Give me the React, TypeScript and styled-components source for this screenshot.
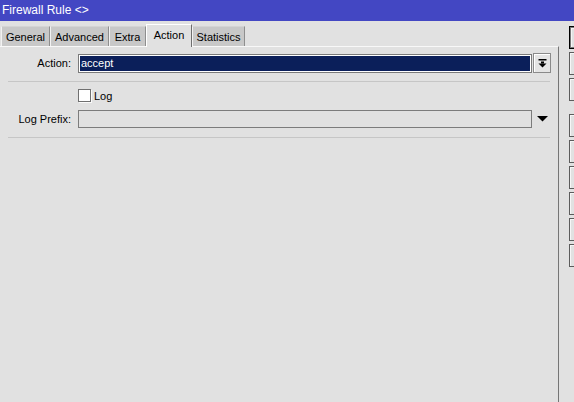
import React from "react";
import styled, { createGlobalStyle } from "styled-components";

const Global = createGlobalStyle`
  html, body { margin: 0; padding: 0; background: #e1e1e1; }
  body { font-family: "Liberation Sans", Arial, sans-serif; font-size: 11px; color: #000; }
  * { box-sizing: border-box; }
`;

const Window = styled.div`
  width: 574px;
  height: 402px;
  overflow: hidden;
  display: flex;
  flex-direction: column;
  background: #e1e1e1;
`;

const TitleBar = styled.div`
  height: 21px;
  flex: none;
  background: #4347c3;
  color: #fff;
  font-size: 12px;
  line-height: 21px;
  padding-left: 2px;
  white-space: nowrap;
`;

const Body = styled.div`
  flex: 1;
  display: flex;
  min-height: 0;
`;

const Left = styled.div`
  width: 559px;
  flex: none;
  display: flex;
  flex-direction: column;
  padding-top: 3px;
`;

const TabStrip = styled.div`
  height: 22px;
  flex: none;
  display: flex;
  align-items: flex-end;
  padding-left: 1px;
`;

const Tab = styled.div<{ $w: number; $active?: boolean }>`
  width: ${(p) => p.$w}px;
  height: ${(p) => (p.$active ? 23 : 20)}px;
  margin-bottom: ${(p) => (p.$active ? -1 : 0)}px;
  position: relative;
  z-index: ${(p) => (p.$active ? 1 : 0)};
  background: ${(p) => (p.$active ? "#e1e1e1" : "#c8c8c8")};
  border-left: 1px solid ${(p) => (p.$active ? "#ffffff" : "#f2f2f2")};
  border-top: 1px solid ${(p) => (p.$active ? "#ffffff" : "#d4d4d4")};
  border-right: 1px solid ${(p) => (p.$active ? "#6e6e6e" : "#8e8e8e")};
  display: flex;
  align-items: center;
  justify-content: center;
  padding-bottom: ${(p) => (p.$active ? 2 : 0)}px;
  white-space: nowrap;
`;

const Panel = styled.div`
  flex: 1;
  border-top: 1px solid #f8f8f8;
  border-right: 1px solid #757575;
  padding: 6px 8px 0 8px;
  display: flex;
  flex-direction: column;
`;

const FieldRow = styled.div<{ $h: number; $mt?: number }>`
  display: grid;
  grid-template-columns: 63px 454px 17px;
  column-gap: 7px;
  height: ${(p) => p.$h}px;
  margin-top: ${(p) => p.$mt ?? 0}px;
  align-items: center;
  & > :nth-child(3) { margin-left: -6px; }
`;

const Label = styled.div`
  text-align: right;
  white-space: nowrap;
`;

const SelectBox = styled.div`
  height: 19px;
  border: 1px solid #7a7a7a;
  background: #0b1f5a;
  box-shadow: inset 0 0 0 1px #ffffff;
  color: #fff;
  padding-left: 2px;
  line-height: 16px;
`;

const TextBox = styled.div`
  height: 18px;
  border: 1px solid #7c7c7c;
  background: #e1e1e1;
`;

const DropButton = styled.div`
  width: 18px;
  height: 20px;
  border: 1px solid #8a8a8a;
  background: #e4e4e4;
  box-shadow: inset 1px 1px 0 #ffffff;
  display: flex;
  align-items: center;
  justify-content: center;
`;

const ArrowSlot = styled.div`
  width: 18px;
  height: 18px;
  display: flex;
  align-items: center;
  justify-content: center;
`;

const Separator = styled.div<{ $mt: number }>`
  height: 1px;
  background: #c6c6c6;
  margin-top: ${(p) => p.$mt}px;
  flex: none;
`;

const CheckRow = styled.label`
  display: flex;
  align-items: center;
  gap: 3px;
  margin-left: 70px;
  margin-top: 7px;
  height: 13px;
`;

const CheckBox = styled.span`
  width: 13px;
  height: 13px;
  border: 1px solid #707070;
  background: #fff;
  box-shadow: 1px 1px 0 #fafafa;
  display: inline-block;
`;

const Buttons = styled.div`
  margin-left: 10px;
  padding-top: 5px;
  display: flex;
  flex-direction: column;
  gap: 3px;
  width: 80px;
  flex: none;
`;

const SideButton = styled.div<{ $default?: boolean }>`
  height: 23px;
  width: 80px;
  background: #e1e1e1;
  border: 1px solid ${(p) => (p.$default ? "#000000" : "#5c5c5c")};
  box-shadow: ${(p) =>
    p.$default
      ? "inset 0 0 0 1px #7a7a7a, inset 2px 2px 0 #f6f6f6"
      : "inset 1px 1px 0 #f6f6f6"};
  flex: none;
`;

const GroupGap = styled.div`
  height: 7px;
  flex: none;
`;

const DropIcon = () => (
  <svg width="9" height="9" viewBox="0 0 9 9">
    <rect x="0.5" y="0" width="8" height="1.5" fill="#000" />
    <rect x="3" y="2.5" width="3" height="2" fill="#000" />
    <polygon points="0.5,4.5 8.5,4.5 4.5,8.5" fill="#000" />
  </svg>
);

const TriIcon = () => (
  <svg width="11" height="6" viewBox="0 0 11 6">
    <polygon points="0,0 11,0 5.5,5.5" fill="#000" />
  </svg>
);

export default function App() {
  return (
    <>
      <Global />
      <Window>
        <TitleBar>Firewall Rule &lt;&gt;</TitleBar>
        <Body>
          <Left>
            <TabStrip>
              <Tab $w={49}>General</Tab>
              <Tab $w={59}>Advanced</Tab>
              <Tab $w={37}>Extra</Tab>
              <Tab $w={46} $active>Action</Tab>
              <Tab $w={53}>Statistics</Tab>
            </TabStrip>
            <Panel>
              <FieldRow $h={20}>
                <Label>Action:</Label>
                <SelectBox>accept</SelectBox>
                <DropButton>
                  <DropIcon />
                </DropButton>
              </FieldRow>
              <Separator $mt={8} />
              <CheckRow>
                <CheckBox />
                <span>Log</span>
              </CheckRow>
              <FieldRow $h={18} $mt={8}>
                <Label>Log Prefix:</Label>
                <TextBox />
                <ArrowSlot>
                  <TriIcon />
                </ArrowSlot>
              </FieldRow>
              <Separator $mt={9} />
            </Panel>
          </Left>
          <Buttons>
            <SideButton $default />
            <SideButton />
            <SideButton />
            <GroupGap />
            <SideButton />
            <SideButton />
            <SideButton />
            <SideButton />
            <SideButton />
            <SideButton />
          </Buttons>
        </Body>
      </Window>
    </>
  );
}
